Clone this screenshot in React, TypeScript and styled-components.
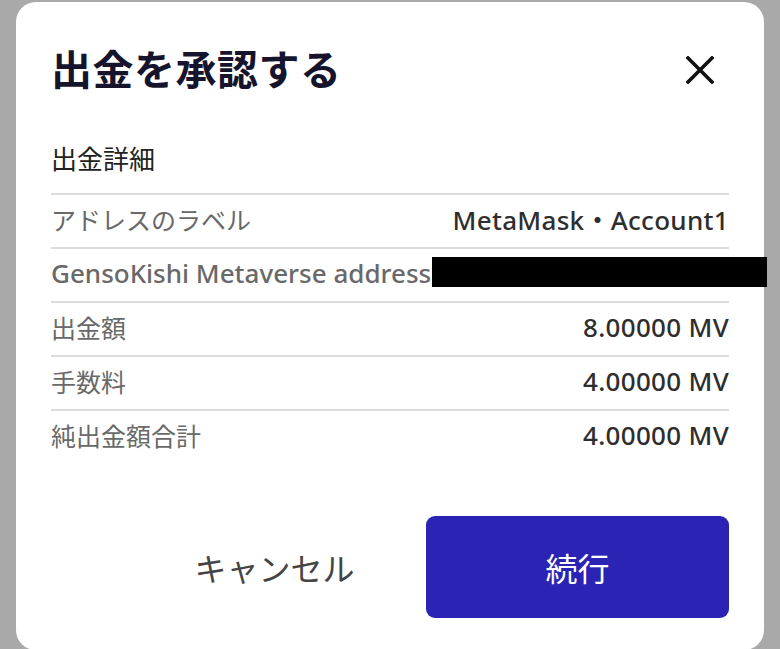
import React from "react";
import styled, { createGlobalStyle } from "styled-components";

const Global = createGlobalStyle`
  html, body { margin: 0; padding: 0; }
  body {
    background: #a9a9a9;
    font-family: "Noto Sans", "Noto Sans CJK JP", sans-serif;
    width: 780px;
    height: 649px;
    overflow: hidden;
  }
`;

const Page = styled.div`
  padding: 2px 16px 0;
`;

const Modal = styled.div`
  width: 748px;
  height: 648px;
  box-sizing: border-box;
  background: #ffffff;
  border-radius: 20px;
  padding: 0 35px;
  display: flex;
  flex-direction: column;
`;

const Header = styled.div`
  display: flex;
  align-items: center;
  justify-content: space-between;
  padding-top: 37px;
  height: 56px;
`;

const Title = styled.h1`
  margin: 0;
  font-family: "Noto Sans CJK JP", sans-serif;
  font-weight: 700;
  font-size: 41px;
  line-height: 56px;
  color: #15142c;
  letter-spacing: 0.5px;
`;

const CloseButton = styled.button`
  border: none;
  background: none;
  padding: 0;
  margin-right: 14px;
  margin-top: 6px;
  width: 30px;
  height: 30px;
  display: flex;
  align-items: center;
  justify-content: center;
  cursor: pointer;
`;

const SectionTitle = styled.h2`
  margin: 43px 0 15px;
  font-family: "Noto Sans CJK JP", sans-serif;
  font-weight: 400;
  font-size: 26px;
  line-height: 40px;
  color: #222222;
`;

const List = styled.div`
  display: flex;
  flex-direction: column;
`;

const Row = styled.div`
  position: relative;
  display: flex;
  align-items: center;
  justify-content: space-between;
  box-sizing: border-box;
  height: 54px;
  padding-bottom: 5px;
  border-top: 2px solid #dcdcdc;
`;

const Label = styled.span<{ $latin?: boolean }>`
  font-family: ${(p) =>
    p.$latin ? `"Noto Sans", sans-serif` : `"Noto Sans CJK JP", sans-serif`};
  font-weight: ${(p) => (p.$latin ? 500 : 400)};
  font-size: ${(p) => (p.$latin ? "26px" : "25px")};
  color: #696969;
  white-space: nowrap;
`;

const Value = styled.span`
  font-family: "Noto Sans", "Noto Sans CJK JP", sans-serif;
  font-weight: 500;
  font-size: 26px;
  letter-spacing: 0.3px;
  color: #2e2e2e;
  white-space: nowrap;
`;

const Redaction = styled.div`
  position: absolute;
  left: 381px;
  top: 8px;
  width: 335px;
  height: 30px;
  background: #000000;
`;

const Footer = styled.div`
  display: flex;
  justify-content: flex-end;
  margin-top: 53px;
`;

const Button = styled.button<{ $primary?: boolean }>`
  width: 303px;
  height: 102px;
  border: none;
  border-radius: 9px;
  font-family: "Noto Sans CJK JP", sans-serif;
  font-weight: 400;
  font-size: 32px;
  cursor: pointer;
  background: ${(p) => (p.$primary ? "#2a23b4" : "transparent")};
  color: ${(p) => (p.$primary ? "#ffffff" : "#444444")};
`;

const rows: { label: string; value?: string; latin?: boolean; redacted?: boolean }[] = [
  { label: "アドレスのラベル", value: "MetaMask・Account1" },
  { label: "GensoKishi Metaverse address", latin: true, redacted: true },
  { label: "出金額", value: "8.00000 MV" },
  { label: "手数料", value: "4.00000 MV" },
  { label: "純出金額合計", value: "4.00000 MV" },
];

export default function App() {
  return (
    <>
      <Global />
      <Page>
        <Modal>
          <Header>
            <Title>出金を承認する</Title>
            <CloseButton aria-label="閉じる">
              <svg width="28" height="28" viewBox="0 0 28 28">
                <path
                  d="M2 2 L26 26 M26 2 L2 26"
                  stroke="#111"
                  strokeWidth="3.6"
                  strokeLinecap="square"
                />
              </svg>
            </CloseButton>
          </Header>
          <SectionTitle>出金詳細</SectionTitle>
          <List>
            {rows.map((r) => (
              <Row key={r.label}>
                <Label $latin={r.latin}>{r.label}</Label>
                {r.value && <Value>{r.value}</Value>}
                {r.redacted && <Redaction />}
              </Row>
            ))}
          </List>
          <Footer>
            <Button>キャンセル</Button>
            <Button $primary>続行</Button>
          </Footer>
        </Modal>
      </Page>
    </>
  );
}
